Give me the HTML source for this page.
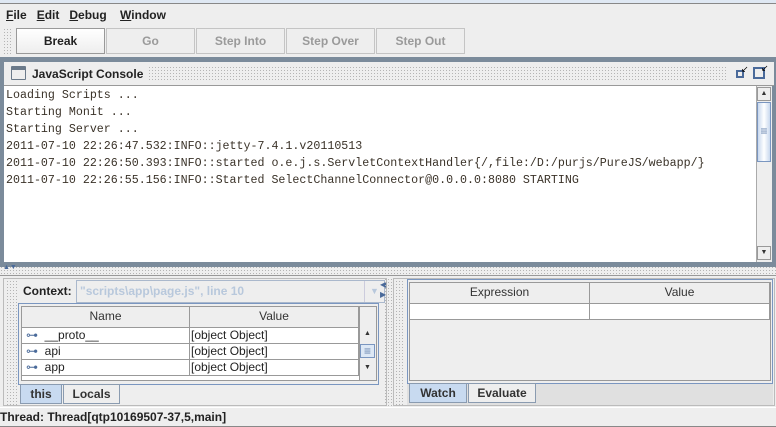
<!DOCTYPE html>
<html><head><style>
*{margin:0;padding:0;box-sizing:border-box}
body{width:776px;height:427px;overflow:hidden;background:#eeeeee;font-family:"Liberation Sans",sans-serif;font-size:12px;color:#333;position:relative}
.a{position:absolute}
.dots{background-image:radial-gradient(#b4b4b4 0.6px,transparent 0.7px);background-size:3px 3px}
.btn{position:absolute;top:28px;height:26px;border:1px solid #c4c4c4;text-align:center;line-height:24px;font-weight:bold;color:#9a9a9a;font-size:12px}
.mono{font-family:"Liberation Mono",monospace;font-size:11.65px;color:#3a3228;white-space:pre;position:absolute;left:6px}
.th{position:absolute;background:#eeeeee;border-right:1px solid #999;border-bottom:1px solid #999;text-align:center;line-height:19px;color:#333}
.td{position:absolute;background:#fff;border-right:1px solid #999;border-bottom:1px solid #999;line-height:15px;color:#222}
.tab{position:absolute;border:1px solid #8a9bb0;font-weight:bold;line-height:18px;text-align:center;color:#333}
</style></head><body>
<div class="a" style="left:0;top:0;width:776px;height:3px;background:#dfe8f3"></div>
<div class="a" style="left:0;top:3px;width:776px;height:1px;background:#888"></div>
<div class="a" style="left:6px;top:8px;font-size:12px;font-weight:bold;color:#222"><u>F</u>ile&nbsp;&nbsp;&nbsp;<u>E</u>dit&nbsp;&nbsp;&nbsp;<u>D</u>ebug&nbsp;&nbsp;&nbsp;&nbsp;<u>W</u>indow</div>
<div class="a dots" style="left:3px;top:28px;width:10px;height:26px"></div>
<div class="btn" style="left:16px;width:89px;color:#222;border-color:#999;background:linear-gradient(#fff,#eee)">Break</div>
<div class="btn" style="left:106px;width:89px">Go</div>
<div class="btn" style="left:196px;width:89px">Step Into</div>
<div class="btn" style="left:286px;width:89px">Step Over</div>
<div class="btn" style="left:376px;width:89px">Step Out</div>
<div class="a" style="left:0;top:57px;width:776px;height:210px;background:#7b8b9b"></div>
<div class="a" style="left:4px;top:62px;width:770px;height:24px;background:#eeeeee;border-bottom:1px solid #999"></div>
<div class="a" style="left:11px;top:66px;width:15px;height:14px;border:1.5px solid #6b7a8a;border-top-width:4px;background:#eee;border-radius:1px"></div>
<div class="a" style="left:32px;top:67px;font-weight:bold;font-size:12px;color:#222">JavaScript Console</div>
<div class="a dots" style="left:148px;top:66px;width:580px;height:16px"></div>
<div class="a" style="left:736px;top:70px;width:8px;height:8px;border:2px solid #4a6a9a;background:#eee"></div>
<div class="a" style="left:741px;top:64px;font-size:9px;color:#000">↙</div>
<div class="a" style="left:753px;top:67px;width:12px;height:12px;border:2px solid #4a6a9a;background:#eee"></div>
<div class="a" style="left:761px;top:63px;font-size:9px;color:#000">↙</div>
<div class="a" style="left:4px;top:86px;width:753px;height:176px;background:#fff"></div>
<div class="mono" style="top:89px">Loading Scripts ...</div>
<div class="mono" style="top:106px">Starting Monit ...</div>
<div class="mono" style="top:123px">Starting Server ...</div>
<div class="mono" style="top:140px">2011-07-10 22:26:47.532:INFO::jetty-7.4.1.v20110513</div>
<div class="mono" style="top:157px">2011-07-10 22:26:50.393:INFO::started o.e.j.s.ServletContextHandler{/,file:/D:/purjs/PureJS/webapp/}</div>
<div class="mono" style="top:174px">2011-07-10 22:26:55.156:INFO::Started SelectChannelConnector@0.0.0.0:8080 STARTING</div>
<div class="a" style="left:756px;top:86px;width:16px;height:176px;background:#eeeeee;border-left:1px solid #aaa"></div>
<div class="a" style="left:757px;top:87px;width:14px;height:14px;border:1px solid #999;text-align:center;font-size:7px;line-height:12px">▲</div>
<div class="a" style="left:757px;top:102px;width:14px;height:60px;border:1px solid #7a96c0;background:linear-gradient(90deg,#c8d8ee,#fff,#c8d8ee);text-align:center;line-height:56px;color:#6a86b0">≡</div>
<div class="a" style="left:757px;top:246px;width:14px;height:14px;border:1px solid #999;text-align:center;font-size:7px;line-height:12px">▼</div>
<div class="a dots" style="left:0;top:266px;width:776px;height:9px"></div>
<div class="a" style="left:3px;top:264px;font-size:7px;color:#4a6a9a">▲▼</div>
<div class="a" style="left:0;top:275px;width:776px;height:1px;background:#999"></div>
<div class="a" style="left:3px;top:278px;width:384px;height:128px;border:1px solid #bbb"></div>
<div class="a dots" style="left:6px;top:280px;width:12px;height:125px"></div>
<div class="a" style="left:23px;top:284px;font-weight:bold;color:#222">Context:</div>
<div class="a" style="left:76px;top:280px;width:309px;height:23px;border:1px solid #aab8cc;background:#eee;color:#b8c8dc;font-weight:bold;line-height:21px;padding-left:3px">"scripts\app\page.js", line 10<span style="position:absolute;right:0;top:0;width:20px;height:21px;border-left:1px solid #ccd;text-align:center;font-size:9px">▼</span></div>
<div class="a" style="left:18px;top:303px;width:361px;height:82px;border:1px solid #7a96c0"></div>
<div class="a" style="left:21px;top:306px;width:356px;height:75px;border:1px solid #999;background:#fff"></div>
<div class="th" style="left:22px;top:307px;width:168px;height:21px">Name</div>
<div class="th" style="left:190px;top:307px;width:169px;height:21px">Value</div>
<div class="td" style="left:22px;top:328px;width:168px;height:16px;padding-left:4px"><span style="color:#4a6a9a">⊶</span>&nbsp;&nbsp;__proto__</div>
<div class="td" style="left:190px;top:328px;width:169px;height:16px;padding-left:1px">[object Object]</div>
<div class="td" style="left:22px;top:344px;width:168px;height:16px;padding-left:4px"><span style="color:#4a6a9a">⊶</span>&nbsp;&nbsp;api</div>
<div class="td" style="left:190px;top:344px;width:169px;height:16px;padding-left:1px">[object Object]</div>
<div class="td" style="left:22px;top:360px;width:168px;height:16px;padding-left:4px"><span style="color:#4a6a9a">⊶</span>&nbsp;&nbsp;app</div>
<div class="td" style="left:190px;top:360px;width:169px;height:16px;padding-left:1px">[object Object]</div>
<div class="a" style="left:359px;top:307px;width:17px;height:73px;background:#eee;border-left:1px solid #999"></div>
<div class="a" style="left:360px;top:330px;width:15px;height:12px;text-align:center;font-size:7px">▲</div>
<div class="a" style="left:360px;top:344px;width:15px;height:14px;border:1px solid #7a96c0;background:#dde8f5;text-align:center;line-height:12px;color:#6a86b0">≡</div>
<div class="a" style="left:360px;top:364px;width:15px;height:12px;text-align:center;font-size:7px">▼</div>
<div class="tab" style="left:20px;top:384px;width:42px;height:20px;background:#c8daf0">this</div>
<div class="tab" style="left:63px;top:384px;width:57px;height:20px;background:#eee">Locals</div>
<div class="a" style="left:380px;top:280px;font-size:8px;color:#4a6a9a;line-height:10px">◀<br>▶</div>
<div class="a dots" style="left:384px;top:278px;width:8px;height:128px"></div>
<div class="a" style="left:393px;top:278px;width:382px;height:128px;border:1px solid #bbb"></div>
<div class="a dots" style="left:395px;top:280px;width:10px;height:125px"></div>
<div class="a" style="left:407px;top:279px;width:366px;height:126px;background:#e0e0e0"></div>
<div class="a" style="left:407px;top:279px;width:366px;height:105px;border:1px solid #7a96c0;background:#eee"></div>
<div class="a" style="left:409px;top:282px;width:362px;height:99px;border:1px solid #999;background:#eee"></div>
<div class="th" style="left:410px;top:283px;width:180px;height:21px">Expression</div>
<div class="th" style="left:590px;top:283px;width:180px;height:21px">Value</div>
<div class="td" style="left:410px;top:304px;width:180px;height:16px"></div>
<div class="td" style="left:590px;top:304px;width:180px;height:16px"></div>
<div class="tab" style="left:409px;top:383px;width:58px;height:20px;background:#c8daf0">Watch</div>
<div class="tab" style="left:468px;top:383px;width:68px;height:20px;background:#eee">Evaluate</div>
<div class="a" style="left:0;top:407px;width:776px;height:1px;background:#fff"></div>
<div class="a" style="left:0;top:426px;width:776px;height:1px;background:#888"></div>
<div class="a" style="left:0;top:410px;font-weight:bold;color:#222">Thread: Thread[qtp10169507-37,5,main]</div>
</body></html>
